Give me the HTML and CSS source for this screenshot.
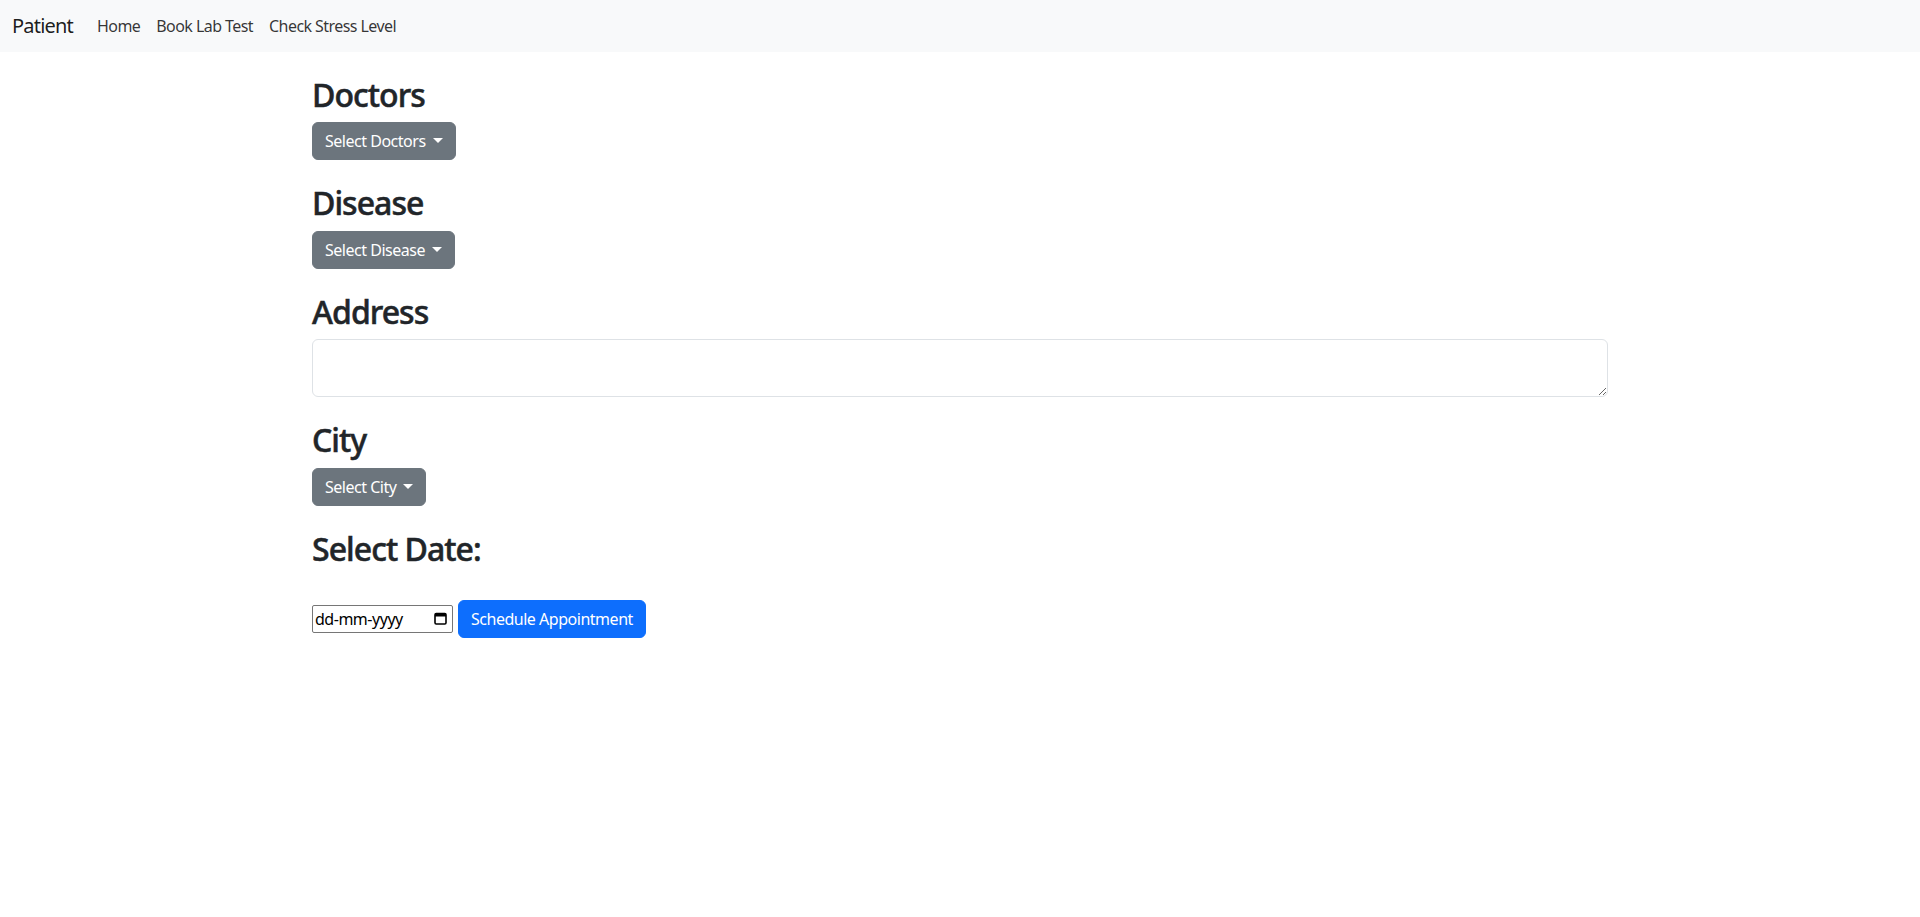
FILE: index.html
```html
<!DOCTYPE html>
<html lang="en">
<head>
<meta charset="utf-8">
<title>Patient</title>
<link rel="stylesheet" href="styles.css">
</head>
<body>
<nav class="navbar">
  <div class="nav-inner">
    <a class="brand" href="#">Patient</a>
    <ul class="nav-links">
      <li><a class="nav-link" href="#">Home</a></li>
      <li><a class="nav-link" href="#">Book Lab Test</a></li>
      <li><a class="nav-link" href="#">Check Stress Level</a></li>
    </ul>
  </div>
</nav>
<main class="container">
  <section class="field">
    <h2 class="field-title">Doctors</h2>
    <div class="dropdown"><button class="btn btn-secondary dropdown-toggle" type="button">Select Doctors</button></div>
  </section>
  <section class="field">
    <h2 class="field-title">Disease</h2>
    <div class="dropdown"><button class="btn btn-secondary dropdown-toggle" type="button">Select Disease</button></div>
  </section>
  <section class="field">
    <h2 class="field-title">Address</h2>
    <textarea class="form-control"></textarea>
  </section>
  <section class="field">
    <h2 class="field-title">City</h2>
    <div class="dropdown"><button class="btn btn-secondary dropdown-toggle" type="button">Select City</button></div>
  </section>
  <section class="field">
    <h2 class="field-title">Select Date:</h2>
    <div class="date-row">
      <label class="date-input">
        <input class="date-text" type="text" placeholder="dd-mm-yyyy">
        <svg class="cal-icon" width="13" height="13" viewBox="0 0 13 13" aria-hidden="true">
          <rect x="1" y="1.5" width="11" height="10.5" rx="1.2" fill="none" stroke="#000" stroke-width="1.6"/>
          <rect x="1" y="1.5" width="11" height="3" fill="#000"/>
        </svg>
      </label>
      <button class="btn btn-primary" type="button">Schedule Appointment</button>
    </div>
  </section>
</main>
</body>
</html>
```
FILE: styles.css
```css
* { box-sizing: border-box; }
body {
  margin: 0;
  font-family: "Noto Sans", "Open Sans", sans-serif;
  font-size: 16px;
  line-height: 1.5;
  letter-spacing: -0.03em;
  color: #212529;
  background: #fff;
}
.navbar {
  background: #f8f9fa;
  height: 52px;
}
.nav-inner {
  display: flex;
  align-items: center;
  height: 100%;
  padding: 0 12px;
}
.brand {
  font-size: 20px;
  letter-spacing: -0.04em;
  color: rgba(0,0,0,.9);
  text-decoration: none;
  margin-right: 16px;
}
.nav-links {
  display: flex;
  list-style: none;
  margin: 0;
  padding: 0;
}
.nav-link {
  display: block;
  padding: 8px;
  color: rgba(0,0,0,.8);
  text-decoration: none;
  font-size: 16px;
  letter-spacing: -0.035em;
}
.container {
  width: 1320px;
  margin: 0 auto;
  padding: 0 12px;
}
.field { margin-top: 24px; }
.field-title {
  margin: 0 0 8px;
  font-size: 32px;
  font-weight: 500;
  letter-spacing: -0.03em;
  line-height: 1.2;
  -webkit-text-stroke: 0.5px currentColor;
}
.btn {
  display: inline-block;
  font-family: inherit;
  font-size: 16px;
  line-height: 1.5;
  letter-spacing: inherit;
  padding: 6px 12px;
  border: 1px solid transparent;
  border-radius: 6px;
  color: #fff;
  cursor: pointer;
}
.btn-secondary { background: #6c757d; border-color: #6c757d; }
.btn-primary { background: #0d6efd; border-color: #0d6efd; }
.dropdown-toggle::after {
  content: "";
  display: inline-block;
  margin-left: 7px;
  vertical-align: 4px;
  border-top: 5px solid;
  border-right: 5.5px solid transparent;
  border-left: 5.5px solid transparent;
  border-bottom: 0;
}
.form-control {
  display: block;
  width: 100%;
  height: 58px;
  padding: 6px 12px;
  font-family: inherit;
  font-size: 16px;
  border: 1px solid #dee2e6;
  border-radius: 6px;
  resize: vertical;
}
.date-row {
  display: flex;
  align-items: center;
  gap: 5px;
  margin-top: 32px;
}
.date-input {
  display: flex;
  align-items: center;
  width: 141px;
  height: 28px;
  padding: 0 5px 0 2px;
  border: 1px solid #767676;
  border-radius: 2px;
  background: #fff;
}
.date-text {
  flex: 1;
  min-width: 0;
  border: 0;
  padding: 0;
  outline: none;
  font-family: inherit;
  font-size: 16px;
  letter-spacing: inherit;
  color: #000;
  background: transparent;
}
.date-text::placeholder { color: #000; opacity: 1; }
.cal-icon { flex: none; }
```
